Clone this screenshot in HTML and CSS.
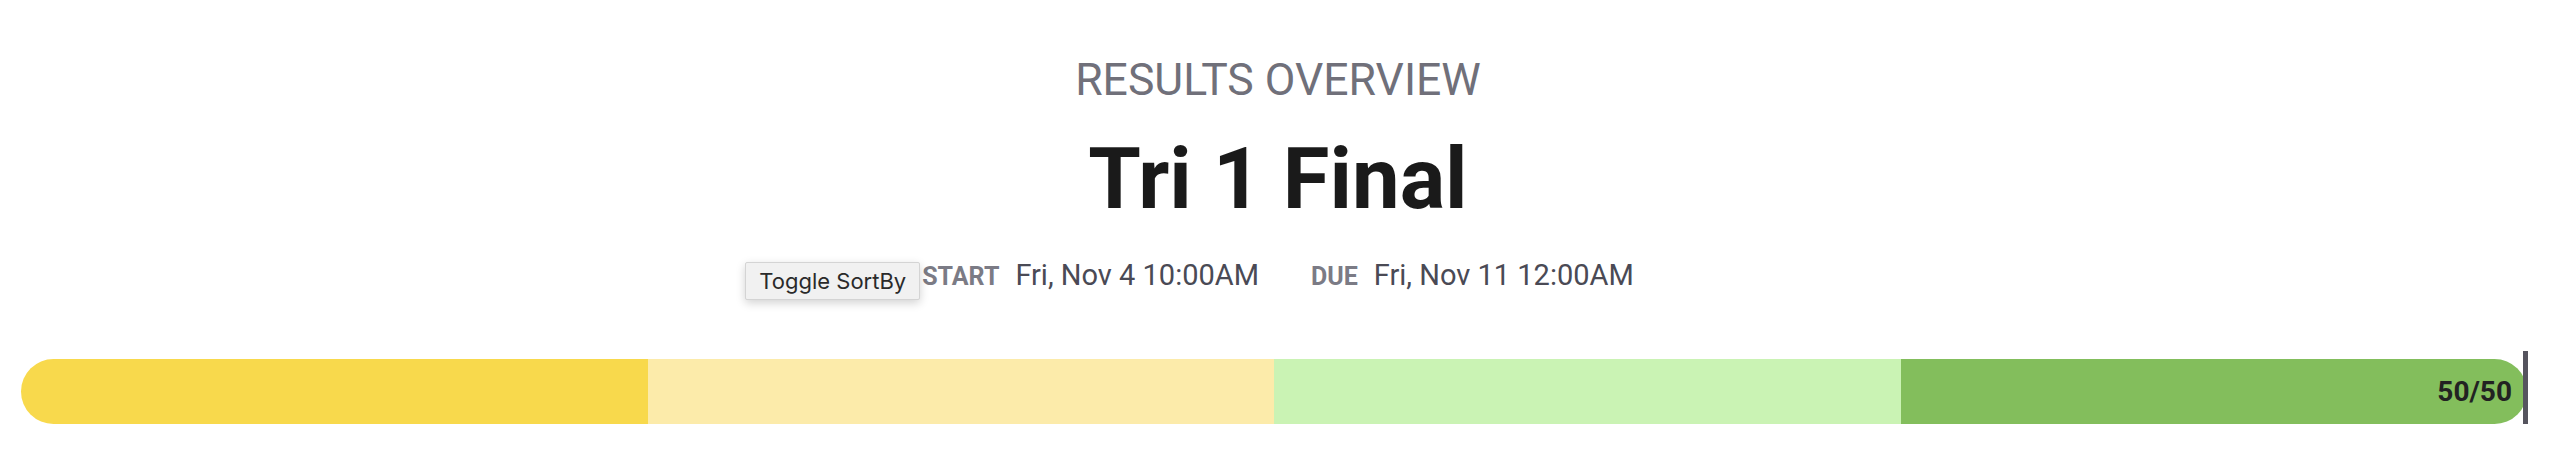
FILE: index.html
```html
<!DOCTYPE html>
<html>
<head>
<meta charset="utf-8">
<link rel="stylesheet" href="styles.css">
</head>
<body>
<main class="overview">
  <div class="eyebrow">RESULTS OVERVIEW</div>
  <h1 class="title">Tri 1 Final</h1>
  <div class="meta">
    <div class="meta-item">
      <span class="meta-label">START</span>
      <span class="meta-value">Fri, Nov 4 10:00AM</span>
      <div class="tooltip">Toggle SortBy</div>
    </div>
    <div class="meta-item">
      <span class="meta-label">DUE</span>
      <span class="meta-value">Fri, Nov 11 12:00AM</span>
    </div>
  </div>
  <div class="progress">
    <div class="seg seg-1"></div>
    <div class="seg seg-2"></div>
    <div class="seg seg-3"></div>
    <div class="seg seg-4"><span class="count">50/50</span></div>
    <div class="marker"></div>
  </div>
</main>
</body>
</html>
```

FILE: styles.css
```css
* { box-sizing: border-box; }
html, body { margin: 0; padding: 0; background: #ffffff; }
body { font-family: Roboto, "Noto Sans", sans-serif; }

.overview {
  display: flex;
  flex-direction: column;
  align-items: center;
  padding-top: 54px;
}

.eyebrow {
  font-size: 44.5px;
  line-height: 52px;
  font-weight: 400;
  color: #70707a;
}

.title {
  margin: 20px 0 0;
  font-size: 85px;
  line-height: 106px;
  font-weight: 700;
  color: #1a1a1a;
}

.meta {
  margin-top: 26px;
  display: flex;
  align-items: baseline;
  gap: 52px;
  height: 34px;
}

.meta-item {
  position: relative;
  display: flex;
  align-items: baseline;
  gap: 16px;
}

.meta-label {
  font-size: 25px;
  font-weight: 700;
  color: #7b7b85;
}

.meta-value {
  font-size: 29px;
  line-height: 34px;
  font-weight: 400;
  color: #4a4a55;
}

.tooltip {
  position: absolute;
  right: 100%;
  top: 4px;
  width: 175px;
  height: 38px;
  margin-right: 2px;
  display: flex;
  align-items: center;
  justify-content: center;
  background: #f1f1f1;
  border: 1px solid #d4d4d4;
  border-radius: 2px;
  box-shadow: 0 3px 10px rgba(0, 0, 0, 0.18);
  font-family: Inter, "Liberation Sans", sans-serif;
  font-size: 22px;
  color: #2a2a2a;
  white-space: nowrap;
}

.progress {
  position: relative;
  align-self: stretch;
  margin: 67px 29px 0 21px;
  height: 65px;
  display: grid;
  grid-template-columns: repeat(4, 1fr);
}

.seg { height: 100%; }
.seg-1 { background: #f8d94c; border-radius: 33px 0 0 33px; }
.seg-2 { background: #fcebaa; }
.seg-3 { background: #caf3b4; }
.seg-4 {
  background: #83be5c;
  border-radius: 0 33px 33px 0;
  display: flex;
  align-items: center;
  justify-content: flex-end;
  padding-right: 15px;
}

.count {
  font-size: 28px;
  font-weight: 700;
  color: #222222;
}

.marker {
  position: absolute;
  right: -1px;
  top: -8px;
  bottom: -7px;
  width: 5px;
  background: #55545e;
}
```
